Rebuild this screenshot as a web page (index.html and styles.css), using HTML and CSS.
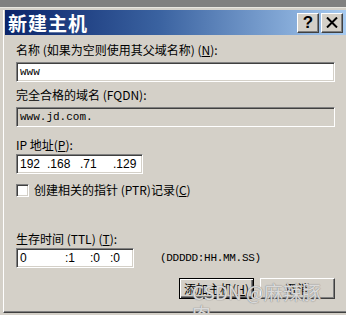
FILE: index.html
```html
<!DOCTYPE html>
<html lang="zh-CN">
<head>
  <meta charset="UTF-8">
  <title>新建主机</title>
  <link rel="stylesheet" href="styles.css">
</head>
<body>
  <div class="top-strip"></div>
  <div class="dialog">
    <div class="titlebar">
      <span class="title">新建主机</span>
      <div class="title-buttons">
        <span class="tbtn help">?</span>
        <span class="tbtn close">
          <svg width="12" height="11" viewBox="0 0 12 11"><path d="M1 0.5 L11 10.5 M11 0.5 L1 10.5" stroke="#000" stroke-width="2"/></svg>
        </span>
      </div>
    </div>

    <div class="content">
      <label class="lbl first">名称 (如果为空则使用其父域名称) (<u>N</u>):</label>
      <div class="field wide">www</div>

      <label class="lbl">完全合格的域名 (FQDN):</label>
      <div class="field wide readonly">www.jd.com.</div>

      <label class="lbl gap-ip">IP 地址(<u>P</u>):</label>
      <div class="field ip">
        <span class="seg s1">192</span><span class="seg s2">.168</span><span class="seg s3">.71</span><span class="seg">.129</span>
      </div>

      <div class="check-row">
        <span class="checkbox"></span>
        <span>创建相关的指针 (PTR)记录(<u>C</u>)</span>
      </div>

      <label class="lbl gap-ttl">生存时间 (TTL) (<u>T</u>):</label>
      <div class="ttl-row">
        <div class="field ttl">
          <span class="seg t1">0</span><span class="seg t2">:1</span><span class="seg t3">:0</span><span class="seg">:0</span>
        </div>
        <span class="ttl-hint">(DDDDD:HH.MM.SS)</span>
      </div>

      <div class="actions">
        <button class="btn default">添加主机(<u>H</u>)</button>
        <button class="btn">取消</button>
        <span class="watermark">CSDN @麻辣豚肉</span>
      </div>
    </div>
  </div>
</body>
</html>
```

FILE: styles.css
```css
body { margin: 0; background: #d4d0c8; font-family: "Noto Sans CJK SC", "DejaVu Sans", sans-serif; font-size: 12px; color: #000; overflow: hidden; }
.top-strip { height: 7px; background: #808080; border-bottom: 1px solid #e8e6e0; }
.dialog { margin-top: 2px; margin-left: 3px; border-left: 1px solid #ffffff; border-bottom: 1px solid #404040; height: 302px; box-shadow: inset 0 -1px 0 #808080; }
.titlebar { display: flex; align-items: center; justify-content: space-between; height: 25px; margin-left: 1px; padding: 0 3px 0 3px; background: linear-gradient(to right, #0a246a 0%, #3a62a0 45%, #a6caf0 100%); }
.title { color: #fff; font-weight: bold; font-size: 19px; line-height: 25px; letter-spacing: 1px; }
.title-buttons { display: flex; gap: 2px; }
.tbtn { display: flex; align-items: center; justify-content: center; width: 22px; height: 20px; box-sizing: border-box; background: #d4d0c8; border-top: 1px solid #fff; border-left: 1px solid #fff; border-right: 1px solid #404040; border-bottom: 1px solid #404040; box-shadow: inset -1px -1px 0 #808080; }
.help { font-family: "Liberation Sans", sans-serif; font-weight: bold; font-size: 17px; line-height: 18px; }
.content { padding-left: 12px; padding-right: 7px; }
.lbl { display: block; line-height: 14px; margin-top: 6px; }
.lbl.first { margin-top: 8px; }
.lbl.gap-ip { margin-top: 11px; }
.lbl.gap-ttl { margin-top: 35px; }
u { text-decoration: underline; }
.field { box-sizing: border-box; height: 20px; margin-top: 5px; background: #fff; border-top: 1px solid #808080; border-left: 1px solid #808080; border-right: 1px solid #fff; border-bottom: 1px solid #fff; box-shadow: inset 1px 1px 0 #404040, inset -1px -1px 0 #d4d0c8; padding-left: 3px; line-height: 18px; font-family: "Liberation Mono", "Noto Sans CJK SC", monospace; font-size: 11px; white-space: nowrap; display: flex; }
.field.wide { width: 319px; }
.field.readonly { background: #d4d0c8; }
.field.ip { width: 127px; margin-top: 2px; font-family: "Liberation Sans", sans-serif; font-size: 12px; }
.seg { display: inline-block; }
.s1 { width: 27px; }
.s2, .s3 { width: 33px; }
.check-row { display: flex; align-items: center; gap: 5px; margin-top: 9px; line-height: 14px; }
.checkbox { width: 13px; height: 13px; box-sizing: border-box; background: #fff; border-top: 1px solid #808080; border-left: 1px solid #808080; border-right: 1px solid #fff; border-bottom: 1px solid #fff; box-shadow: inset 1px 1px 0 #404040, inset -1px -1px 0 #d4d0c8; }
.ttl-row { display: flex; align-items: center; margin-top: 2px; }
.field.ttl { width: 118px; margin-top: 0; font-family: "Liberation Sans", sans-serif; font-size: 12px; }
.t1 { width: 45px; }
.t2 { width: 25px; }
.t3 { width: 20px; }
.ttl-hint { margin-left: 26px; font-family: "Liberation Mono", monospace; font-size: 11px; letter-spacing: -0.3px; }
.actions { position: relative; display: flex; justify-content: flex-end; gap: 6px; margin-top: 10px; width: 319px; }
.btn { width: 75px; height: 21px; box-sizing: border-box; padding: 0; background: #d4d0c8; font-family: "Noto Sans CJK SC", sans-serif; font-size: 12px; color: #000; border-top: 1px solid #fff; border-left: 1px solid #fff; border-right: 1px solid #404040; border-bottom: 1px solid #404040; box-shadow: inset -1px -1px 0 #808080; }
.btn.default { border: 1px solid #000; box-shadow: inset 1px 1px 0 #fff, inset -1px -1px 0 #404040, inset -2px -2px 0 #808080; }
.watermark { position: absolute; left: 176px; top: 3px; font-size: 19px; line-height: 22px; color: rgba(255, 255, 255, 0.7); text-shadow: 0 0 1px #888, 0 0 1px #888; pointer-events: none; }
```
